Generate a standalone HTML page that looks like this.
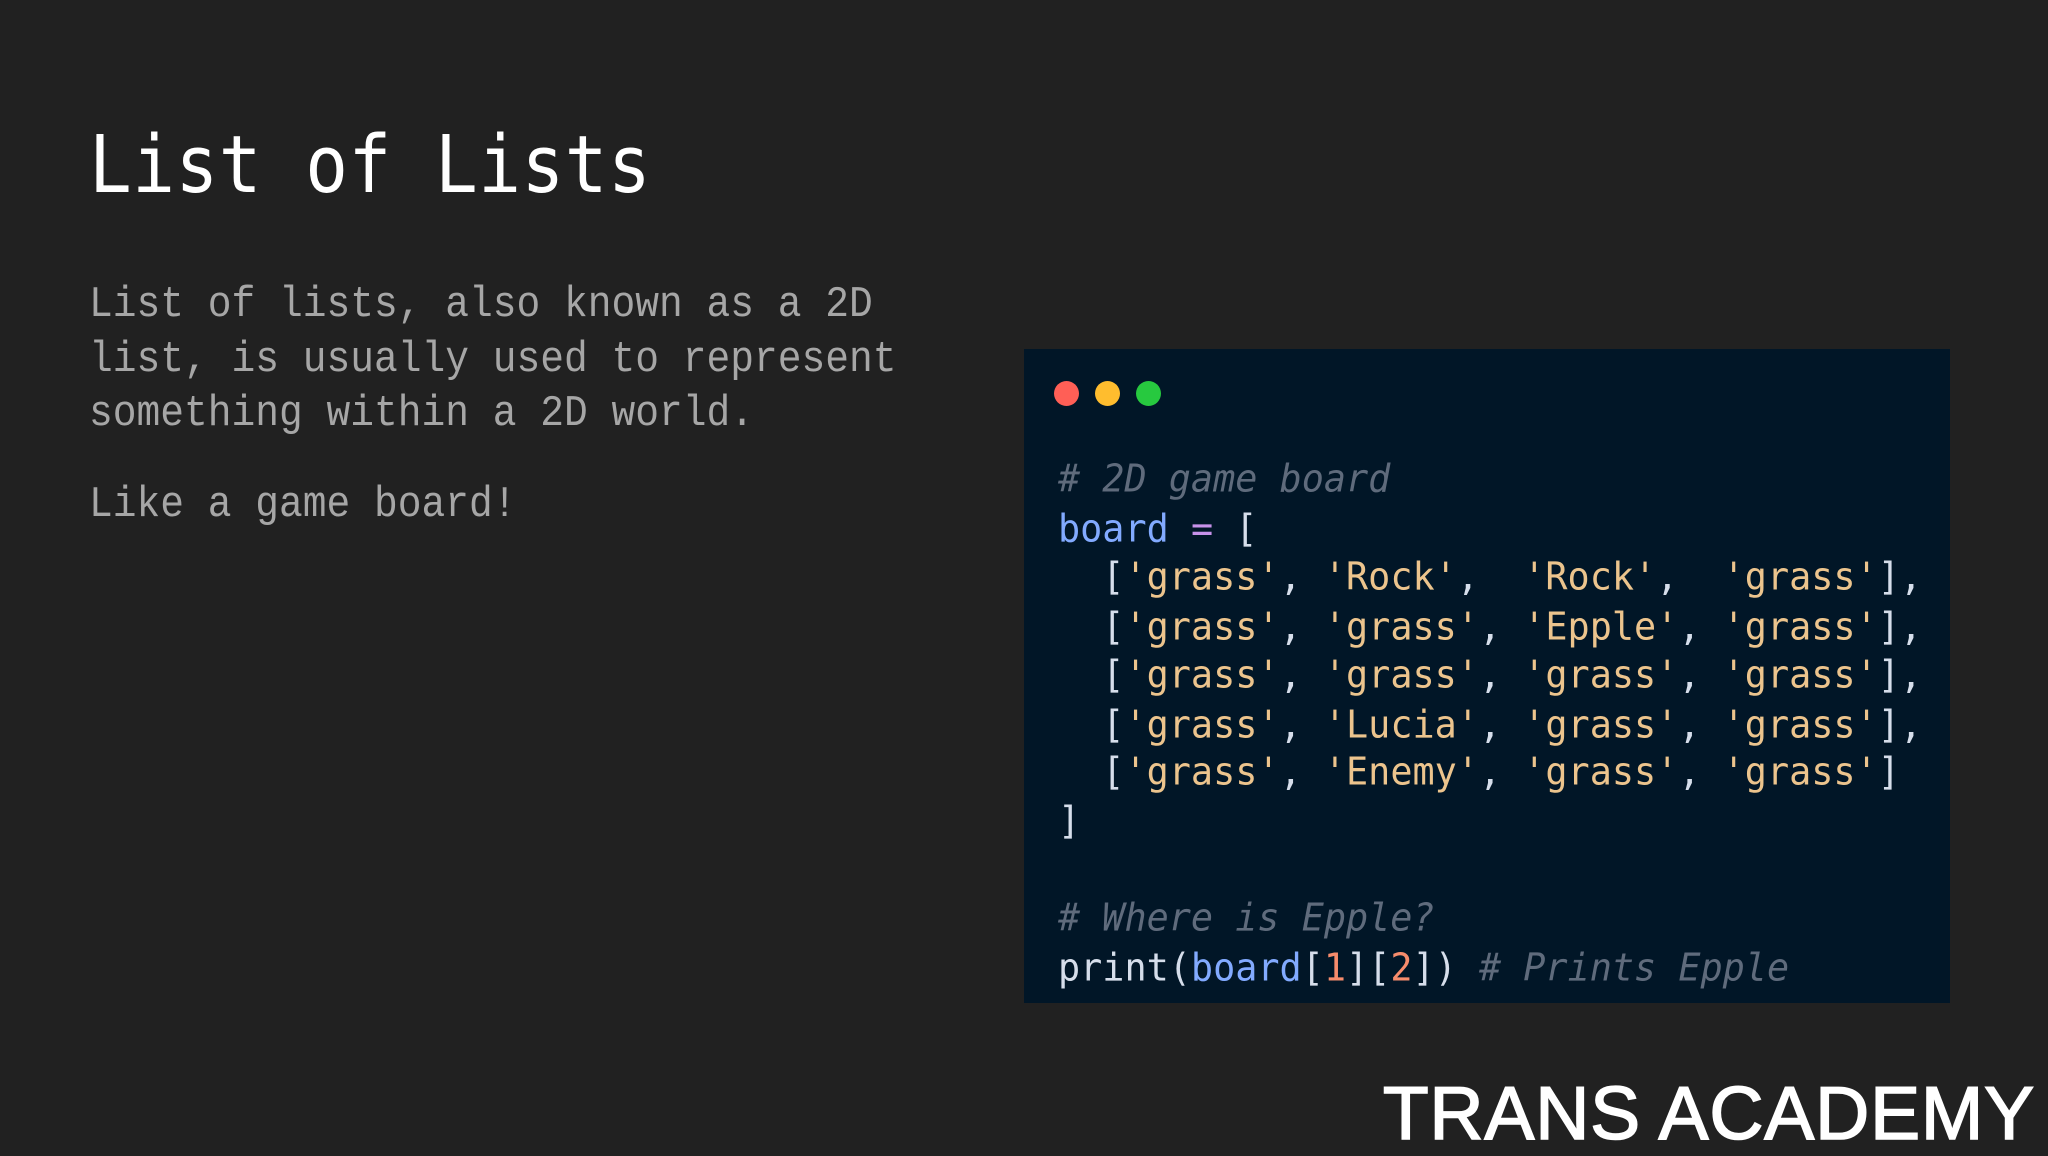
<!DOCTYPE html>
<html><head><meta charset="utf-8"><style>
html,body{margin:0;padding:0;}
body{width:2048px;height:1152px;background:#212121;position:relative;overflow:hidden;}
.t{position:absolute;white-space:pre;line-height:1;}
#title{left:89px;top:118px;font:71px "DejaVu Sans Mono","Liberation Mono",monospace;color:#fff;transform:scaleY(1.12);transform-origin:left top;letter-spacing:0.5px;}
.b{font:39.6px "Liberation Mono","DejaVu Sans Mono",monospace;color:#a6a6a6;left:89px;transform:scaleY(1.1);transform-origin:left center;}
#code{position:absolute;left:1024px;top:349px;width:926px;height:654px;background:#011627;}
.dot{position:absolute;top:381px;width:25px;height:25px;border-radius:50%;}
.c{font:36.8px "DejaVu Sans Mono","Liberation Mono",monospace;color:#d6deeb;left:1058px;transform:scaleY(1.03);transform-origin:left center;}
.cm{color:#5f6b7c;font-style:italic;}
.v{color:#82aaff;}.o{color:#c792ea;}.s{color:#ecc48d;}.n{color:#f78c6c;}
#logo{right:13px;top:1070px;font:75px "Liberation Sans",sans-serif;color:#fff;-webkit-text-stroke:1.6px #fff;letter-spacing:0.8px;}
</style></head><body>
<div id="title" class="t">List of Lists</div>
<div class="t b" style="top:282px">List of lists, also known as a 2D</div>
<div class="t b" style="top:337px">list, is usually used to represent</div>
<div class="t b" style="top:391px">something within a 2D world.</div>
<div class="t b" style="top:482px">Like a game board!</div>
<div id="code"></div>
<div class="dot" style="left:1054px;background:#ff5f56"></div>
<div class="dot" style="left:1095px;background:#ffbd2e"></div>
<div class="dot" style="left:1136px;background:#27c93f"></div>
<div class="t c cm" style="top:457px"># 2D game board</div>
<div class="t c" style="top:507px"><span class="v">board</span> <span class="o">=</span> [</div>
<div class="t c" style="top:555px">  [<span class="s">'grass'</span>, <span class="s">'Rock'</span>,  <span class="s">'Rock'</span>,  <span class="s">'grass'</span>],</div>
<div class="t c" style="top:605px">  [<span class="s">'grass'</span>, <span class="s">'grass'</span>, <span class="s">'Epple'</span>, <span class="s">'grass'</span>],</div>
<div class="t c" style="top:653px">  [<span class="s">'grass'</span>, <span class="s">'grass'</span>, <span class="s">'grass'</span>, <span class="s">'grass'</span>],</div>
<div class="t c" style="top:703px">  [<span class="s">'grass'</span>, <span class="s">'Lucia'</span>, <span class="s">'grass'</span>, <span class="s">'grass'</span>],</div>
<div class="t c" style="top:750px">  [<span class="s">'grass'</span>, <span class="s">'Enemy'</span>, <span class="s">'grass'</span>, <span class="s">'grass'</span>]</div>
<div class="t c" style="top:799px">]</div>
<div class="t c cm" style="top:896px"># Where is Epple?</div>
<div class="t c" style="top:946px">print(<span class="v">board</span>[<span class="n">1</span>][<span class="n">2</span>]) <span class="cm"># Prints Epple</span></div>
<div id="logo" class="t">TRANS ACADEMY</div>
</body></html>
